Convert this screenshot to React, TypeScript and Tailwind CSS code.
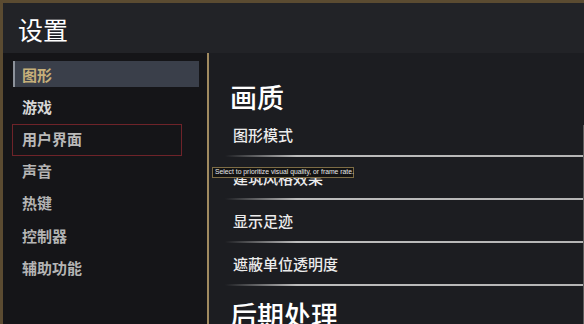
import React from "react";

const cjk = { fontFamily: '"Noto Sans CJK SC", "Noto Sans", sans-serif' };

const navItems = [
  { label: "图形", selected: true },
  { label: "游戏", bright: true },
  { label: "用户界面", outlined: true },
  { label: "声音" },
  { label: "热键" },
  { label: "控制器" },
  { label: "辅助功能" },
];

const rows = ["图形模式", "建筑风格效果", "显示足迹", "遮蔽单位透明度"];

export default function App() {
  return (
    <div
      className="relative w-[584px] h-[324px] overflow-hidden bg-[#5b4b31] pt-[3px] pl-[3px] flex flex-col"
      style={cjk}
    >
      {/* Header */}
      <div className="h-[50px] shrink-0 bg-[#222327] flex items-center pl-[15px]">
        <span className="text-[25px] leading-[25px] text-white mt-[2px]">设置</span>
      </div>

      {/* Body */}
      <div className="flex flex-1 min-h-0">
        {/* Sidebar */}
        <div className="w-[204px] shrink-0 bg-[#151518] pt-[5px] flex flex-col">
          {navItems.map((it) => (
            <div key={it.label} className="h-[32.2px] flex items-center">
              {it.selected ? (
                <div className="ml-[10px] w-[186px] h-[26px] bg-[#3a3f4a] border-l-2 border-[#8d929b] flex items-center pl-[7px]">
                  <span className="text-[15px] font-bold text-[#c6b07a] leading-none">{it.label}</span>
                </div>
              ) : it.outlined ? (
                <div className="ml-[9px] w-[170px] h-[32px] mt-[3px] border border-[#6e2329] flex items-center pl-[9px]">
                  <span className="text-[15px] font-bold text-[#b9b9b9] leading-none -mt-[3px]">{it.label}</span>
                </div>
              ) : (
                <span
                  className={
                    "ml-[19px] text-[15px] font-bold leading-none " +
                    (it.bright ? "text-[#d6d6d6]" : "text-[#b4b4b4]")
                  }
                >
                  {it.label}
                </span>
              )}
            </div>
          ))}
        </div>

        {/* Gold divider */}
        <div className="w-[2px] shrink-0 bg-[#a08a60]" />

        {/* Content */}
        <div className="relative flex-1 bg-[#1c1d21] pl-[16px] pt-[30px] flex flex-col">
          <div className="h-[27px] pl-[5px] text-[27px] leading-[27px] font-medium text-white mb-[4px]">
            画质
          </div>
          {rows.map((r) => (
            <div key={r} className="flex flex-col">
              <div className="h-[41px] flex items-center pl-[8px]">
                <span className="text-[15px] leading-none font-medium text-[#ececec]">{r}</span>
              </div>
              <div className="h-[2px] bg-gradient-to-r from-transparent via-[#bdbdbd] via-[20%] to-[#b5b5b5]" />
            </div>
          ))}
          <div className="mt-[15px] h-[27px] pl-[5px] text-[27px] leading-[27px] font-medium text-white">
            后期处理
          </div>
          {/* scrollbar track */}
          <div className="absolute right-0 top-[72px] bottom-0 w-px bg-[#5c5c5c]" />
        </div>
      </div>

      {/* Tooltip */}
      <div
        className="absolute left-[212px] top-[167px] w-[142px] h-[11px] bg-[#121212] border border-[#7d6c45] flex items-center pl-[2px]"
        style={{ fontFamily: '"Liberation Sans", Arial, sans-serif' }}
      >
        <span className="text-[6.8px] leading-none text-[#e8e8e8] whitespace-nowrap">
          Select to prioritize visual quality, or frame rate.
        </span>
      </div>
    </div>
  );
}
